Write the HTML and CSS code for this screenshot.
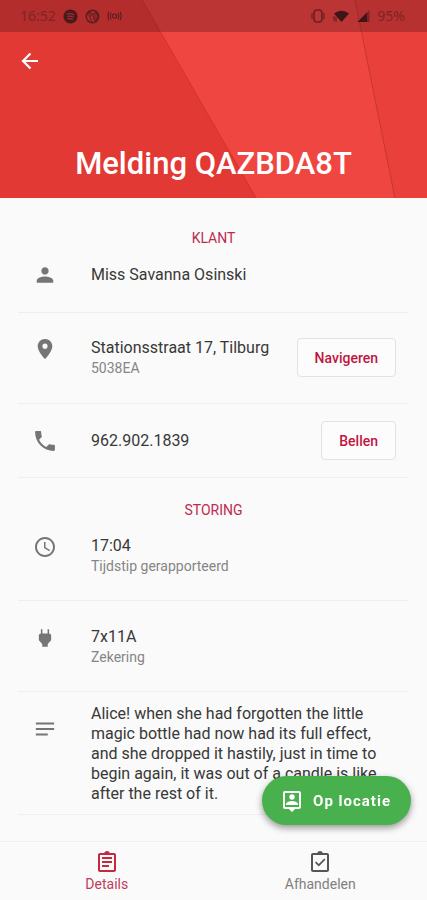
FILE: index.html
```html
<!DOCTYPE html>
<html lang="nl">
<head>
    <meta charset="UTF-8">
    <meta name="viewport" content="width=device-width, initial-scale=1.0">
    <title>Melding QAZBDA8T</title>
    <link rel="stylesheet" href="styles.css">
</head>
<body>
    <header class="header">
        <!-- Angled panels behind the title -->
        <svg class="header-bg" viewBox="0 0 427 197" preserveAspectRatio="none" aria-hidden="true">
            <rect width="427" height="197" fill="#f04641"/>
            <path d="M0 0H142L256 197H0z" fill="#e33935"/>
            <path d="M355 0H427V197H395z" fill="#ea403b"/>
            <path d="M355 0L395 197" stroke="#c93531" stroke-width="1" fill="none"/>
            <path d="M142 0L256 197" stroke="#cf3531" stroke-width="1" fill="none"/>
        </svg>
        <div class="status-bar">
            <div class="status-group">
                <span>16:52</span>
                <svg width="15" height="15" viewBox="0 0 16 16">
                    <circle cx="8" cy="8" r="7.5" fill="#49191b"/>
                    <path d="M4 5.5q4-1.4 8 .8M4.3 8q3.6-1 7 .8M4.8 10.5q3-.8 5.6.7" stroke="#a32d2c" stroke-width="1.2" fill="none"/>
                </svg>
                <svg width="15" height="15" viewBox="0 0 16 16" fill="none" stroke="#5b1d1f">
                    <circle cx="8" cy="8" r="6.6" stroke-width="1.6"/>
                    <path d="M2 5l4-2 2 3-3 3 3 5M8 6l4-3 2 5-3 5-2-3V7" fill="#5b1d1f" stroke-width="1" fill-opacity=".45"/>
                </svg>
                <svg width="15" height="12" viewBox="0 0 16 12" fill="none" stroke="#5b1d1f" stroke-width="1.2">
                    <circle cx="8" cy="6" r="2.2"/>
                    <path d="M4.500 2.500q-2 3.500 0 7M11.500 2.500q2 3.500 0 7M2 1.500q-2 4.500 0 9M14 1.500q2 4.500 0 9"/>
                </svg>
            </div>
            <div class="status-group">
                <svg width="14" height="16" viewBox="0 0 14 16" fill="none" stroke="#6b2022" stroke-width="1.6">
                    <rect x="3" y="2" width="8" height="12" rx="3"/>
                    <path d="M1 5v6M13 5v6" stroke-width="1.2"/>
                </svg>
                <svg width="18" height="14" viewBox="0 0 18 14" fill="#3f1517">
                    <path d="M2 4.5Q9.5-1 17 4.5L9.5 13z"/>
                    <path d="M2 7v5M4 8v5" stroke="#5b1d1f"/>
                </svg>
                <svg width="13" height="14" viewBox="0 0 13 14">
                    <path d="M12.5 1V13H.5z" fill="#7d2526"/>
                    <path d="M10 3.5V13H.5z" fill="#3f1517"/>
                </svg>
                <span>95%</span>
            </div>
        </div>
        <button class="back" aria-label="Terug">
            <svg width="24" height="24" viewBox="0 0 24 24" fill="none" stroke="#fff" stroke-width="2.2">
                <path d="M20 12H5.500M12.500 4.500L5 12l7.500 7.500"/>
            </svg>
        </button>
        <h1>Melding QAZBDA8T</h1>
    </header>

    <main class="content">
        <section>
            <h2>KLANT</h2>
            <div class="row row-name">
                <svg class="icon" viewBox="0 0 24 24"><path d="M12 11.500c2.210 0 4-1.790 4-4s-1.790-4-4-4-4 1.790-4 4 1.790 4 4 4zm0 2c-3 0-9 1.500-9 4.500v2.500h18V18c0-3-6-4.500-9-4.500z"/></svg>
                <div class="text"><p>Miss Savanna Osinski</p></div>
            </div>
            <div class="row row-address">
                <svg class="icon" viewBox="0 0 24 24"><path d="M12 1C7.600 1 4 4.500 4 8.900 4 14.800 12 23 12 23s8-8.200 8-14.100C20 4.500 16.400 1 12 1zm0 10.700a2.800 2.800 0 1 1 0-5.600 2.800 2.800 0 0 1 0 5.600z"/></svg>
                <div class="text">
                    <p>Stationsstraat 17, Tilburg</p>
                    <p class="sub">5038EA</p>
                </div>
                <button class="action">Navigeren</button>
            </div>
            <div class="row row-phone">
                <svg class="icon" viewBox="2 2 20 20"><path d="M6.620 10.790c1.440 2.830 3.760 5.140 6.590 6.590l2.200-2.200c.27-.27.67-.36 1.020-.24 1.120.37 2.330.57 3.570.57.55 0 1 .45 1 1V20c0 .55-.45 1-1 1-9.390 0-17-7.610-17-17 0-.55.45-1 1-1h3.500c.55 0 1 .45 1 1 0 1.250.2 2.450.57 3.570.11.35.03.74-.25 1.020l-2.200 2.200z"/></svg>
                <div class="text"><p>962.902.1839</p></div>
                <button class="action">Bellen</button>
            </div>
        </section>

        <section>
            <h2>STORING</h2>
            <div class="row row-time">
                <svg class="icon" viewBox="1 1 22 22"><path d="M11.990 2C6.470 2 2 6.480 2 12s4.470 10 9.990 10C17.520 22 22 17.520 22 12S17.520 2 11.990 2zM12 20c-4.420 0-8-3.580-8-8s3.580-8 8-8 8 3.580 8 8-3.580 8-8 8zm.5-13H11v6l5.250 3.150.75-1.230-4.500-2.670z"/></svg>
                <div class="text">
                    <p>17:04</p>
                    <p class="sub">Tijdstip gerapporteerd</p>
                </div>
            </div>
            <div class="row row-fuse">
                <svg class="icon" viewBox="0 0 24 24"><path d="M16.500 7V2.500h-1.700V7H9.200V2.500H7.500V7C6.500 7 5.300 8 5.300 9v5.500L9 18.500v3h6v-3l3.700-4V9c0-1-1.200-2-2.200-2z"/></svg>
                <div class="text">
                    <p>7x11A</p>
                    <p class="sub">Zekering</p>
                </div>
            </div>
            <div class="row row-note">
                <svg class="icon" viewBox="0 0 24 24"><path d="M2 5h20v2H2zM2 11h20v2H2zM2 17h13v2H2z"/></svg>
                <div class="text"><p>Alice! when she had forgotten the little magic bottle had now had its full effect, and she dropped it hastily, just in time to begin again, it was out of a candle is like after the rest of it.</p></div>
            </div>
        </section>
    </main>

    <button class="fab">
        <svg width="24" height="24" viewBox="0 0 24 24" fill="#fff"><path d="M19 2H5c-1.110 0-2 .9-2 2v14c0 1.100.890 2 2 2h4l3 3 3-3h4c1.100 0 2-.9 2-2V4c0-1.100-.9-2-2-2zm0 16H5V4h14v14z"/><circle cx="12" cy="8" r="2.700"/><path d="M6 16v-.9c0-2 4-3.100 6-3.100s6 1.100 6 3.100v.9z"/></svg>
        Op locatie
    </button>

    <nav class="tabs">
        <a href="#details" class="tab active">
            <svg width="24" height="24" viewBox="0 0 24 24"><path d="M7 15h7v2H7zm0-4h10v2H7zm0-4h10v2H7zm12-4h-4.180C14.400 1.840 13.300 1 12 1c-1.300 0-2.400.840-2.820 2H5c-1.100 0-2 .9-2 2v15c0 1.100.9 2 2 2h14c1.100 0 2-.9 2-2V5c0-1.100-.9-2-2-2zm0 17H5V5h14v15z"/></svg>
            Details
        </a>
        <a href="#afhandelen" class="tab">
            <svg width="24" height="24" viewBox="0 0 24 24"><path d="M19 3h-4.180C14.400 1.840 13.300 1 12 1c-1.300 0-2.400.840-2.820 2H5c-1.100 0-2 .9-2 2v15c0 1.100.9 2 2 2h14c1.100 0 2-.9 2-2V5c0-1.100-.9-2-2-2zm0 17H5V5h14v15z"/><path d="M7 12.700l1.200-1.200 2.600 2.600L16.200 8.500l1.200 1.200-6.600 6.800z"/></svg>
            Afhandelen
        </a>
    </nav>
</body>
</html>
```
FILE: styles.css
```css
* {
    box-sizing: border-box;
}

body {
    margin: 0;
    font-family: Roboto, "Liberation Sans", sans-serif;
    font-size: 16px;
    line-height: 20px;
    color: #383838;
    background-color: #fafafa;
}

h1, h2, p {
    margin: 0;
}

button {
    font-family: inherit;
    cursor: pointer;
}

/* Header */
.header {
    position: relative;
    padding-bottom: 14px;
    color: #fff;
}

.header-bg {
    position: absolute;
    top: 0;
    left: 0;
    width: 100%;
    height: 100%;
    z-index: -1;
}

.status-bar {
    display: flex;
    justify-content: space-between;
    height: 32px;
    padding: 0 22px 0 20px;
    font-family: "Noto Sans", sans-serif;
    font-size: 14px;
    color: #7d2526;
    background-color: rgba(85, 22, 28, 0.35);
}

.status-group {
    display: flex;
    align-items: center;
    gap: 7px;
}

.back {
    display: block;
    height: 24px;
    margin: 17px 0 0 18px;
    padding: 0;
    border: none;
    background: none;
}

h1 {
    margin-top: 71px;
    font-size: 31px;
    line-height: 40px;
    font-weight: 500;
    text-align: center;
}

/* Rows */
.content {
    padding: 30px 18px 84px;
}

h2 {
    font-size: 14px;
    font-weight: 400;
    text-align: center;
    color: #bf2b50;
}

section + section {
    padding-top: 22px;
}

.row {
    display: flex;
    align-items: flex-start;
    padding: 0 13px 0 16px;
    border-bottom: 1px solid #efefef;
}

.icon {
    flex: none;
    width: 22px;
    height: 22px;
    margin-right: 35px;
    fill: #757575;
}

.text {
    flex: 1;
}

.sub {
    font-size: 14px;
    color: #858585;
}

.row-name {
    align-items: center;
    padding-top: 16px;
    padding-bottom: 26px;
}

.row-address {
    padding-top: 25px;
    padding-bottom: 25px;
}

.row-phone {
    align-items: center;
    padding-top: 17px;
    padding-bottom: 17px;
}

.row-time {
    padding-top: 16px;
    padding-bottom: 24px;
}

.row-fuse {
    padding-top: 26px;
    padding-bottom: 24px;
}

.row-note {
    padding-top: 12px;
    padding-bottom: 10px;
}

.row-note .icon {
    margin-top: 14px;
}

.action {
    height: 39px;
    padding: 0 17px;
    font-size: 14px;
    font-weight: 500;
    color: #c01540;
    border: 1px solid #e2e2e2;
    border-radius: 4px;
    background-color: #fcfcfc;
}

/* Floating button */
.fab {
    position: fixed;
    right: 16px;
    bottom: 75px;
    display: flex;
    align-items: center;
    gap: 9px;
    height: 49px;
    padding: 0 20px 0 18px;
    font-size: 15px;
    font-weight: 700;
    letter-spacing: 1px;
    color: #fff;
    border: none;
    border-radius: 25px;
    background-color: #48b04d;
    box-shadow: 0 3px 7px rgba(0, 0, 0, 0.4);
}

/* Bottom tabs */
.tabs {
    position: fixed;
    left: 0;
    right: 0;
    bottom: 0;
    display: flex;
    height: 59px;
    padding-top: 8px;
    border-top: 1px solid #eee;
    background-color: #fafafa;
}

.tab {
    flex: 1;
    display: flex;
    flex-direction: column;
    align-items: center;
    font-size: 14px;
    color: #808080;
    text-decoration: none;
}

.tab svg {
    fill: #555;
}

.tab.active {
    color: #c23c5c;
}

.tab.active svg {
    fill: #c62840;
}
```
